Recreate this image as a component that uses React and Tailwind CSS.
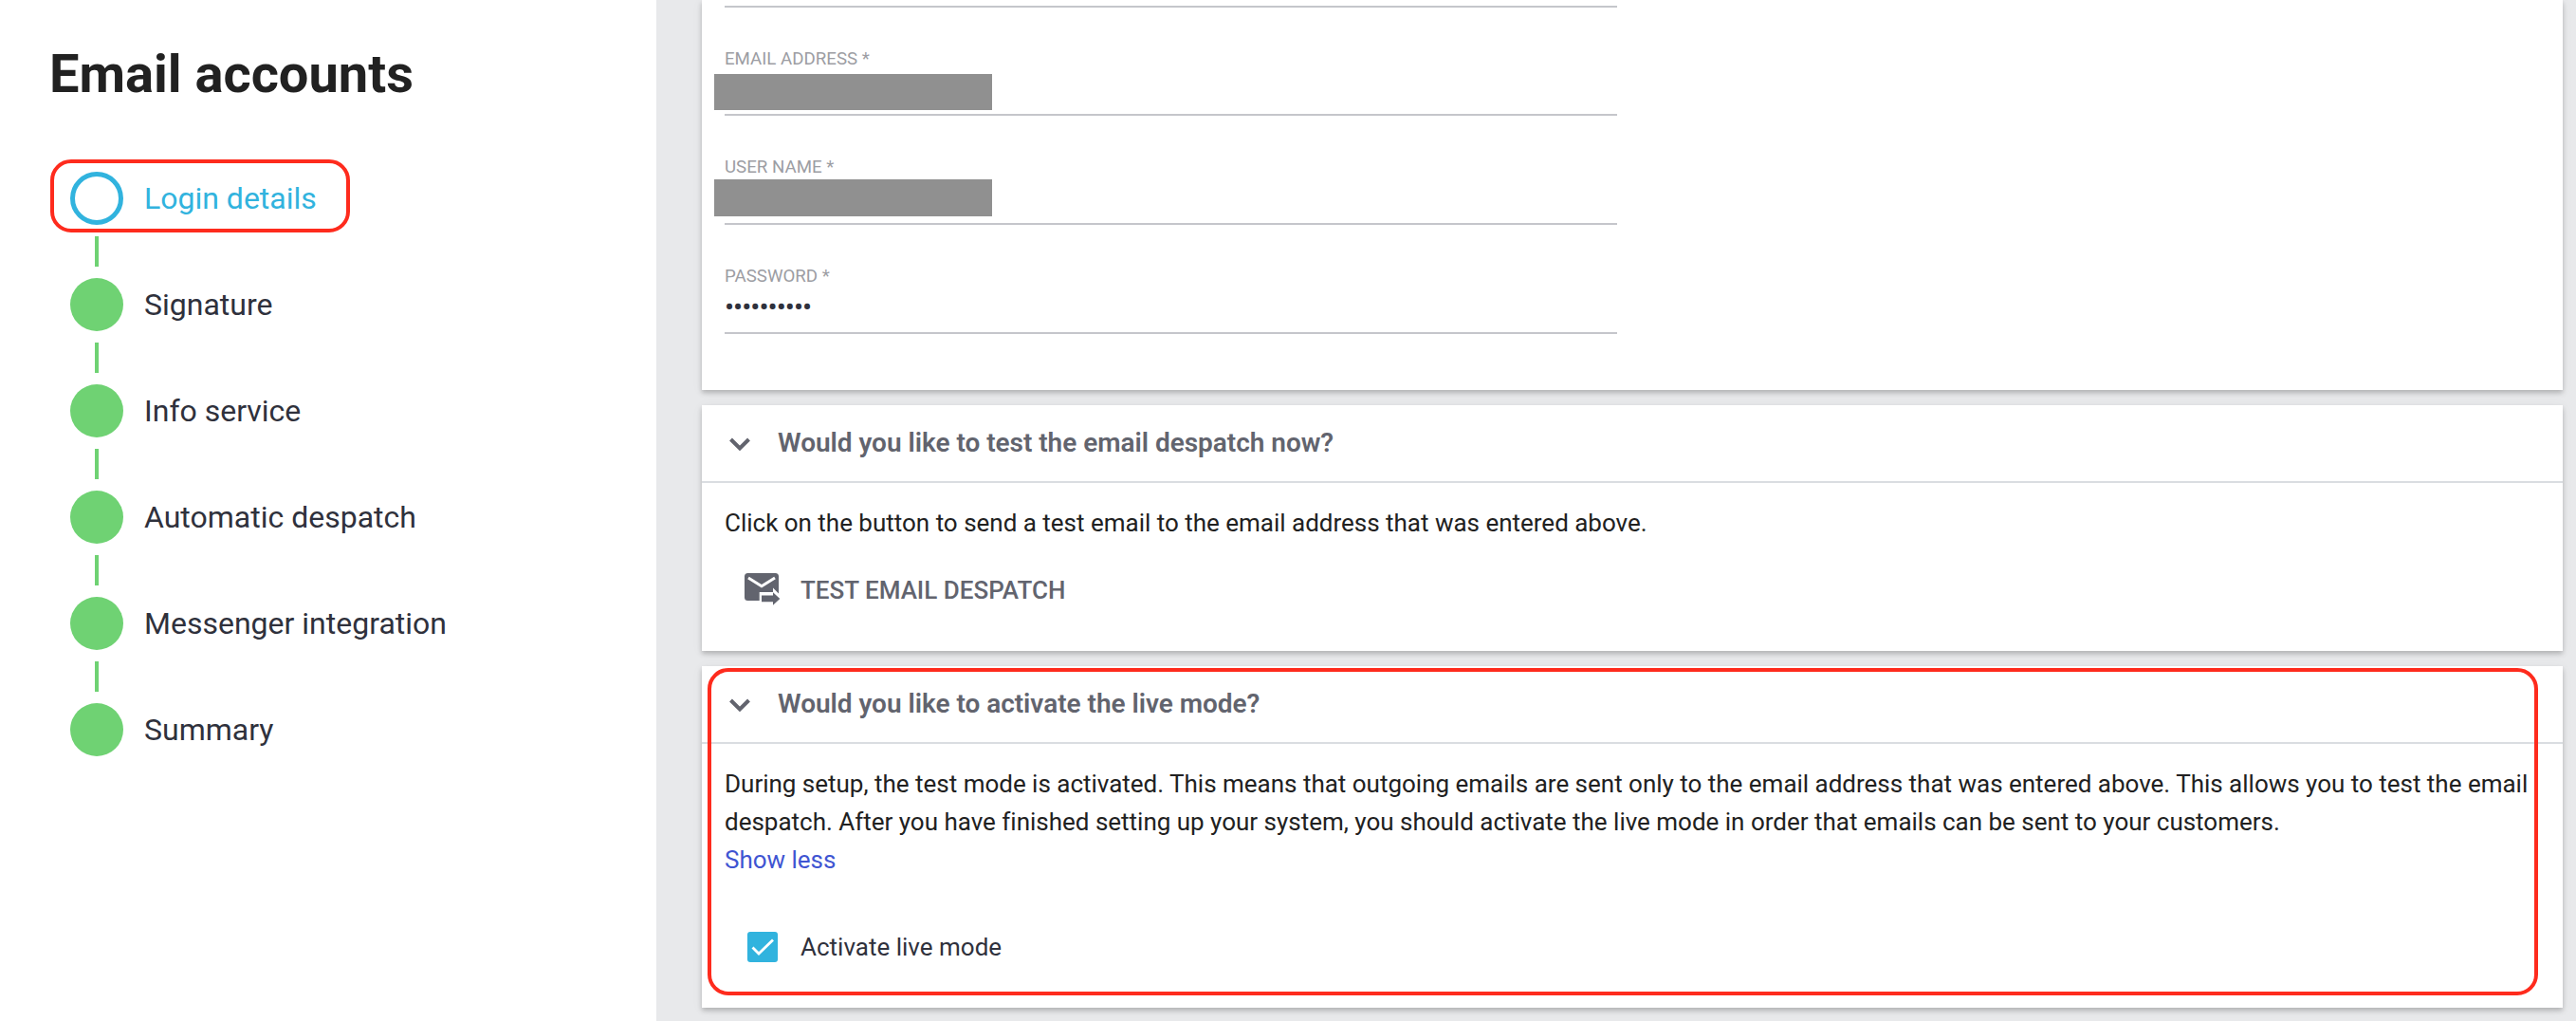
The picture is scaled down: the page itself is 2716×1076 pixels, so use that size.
const steps = ['Login details', 'Signature', 'Info service', 'Automatic despatch', 'Messenger integration', 'Summary'];

function Step({ label, active, last }) {
  return (
    <li>
      <div className={active ? 'relative flex h-14 items-center gap-[22px] text-[#31b3de]' : 'relative flex h-14 items-center gap-[22px] text-[#2f313c]'}>
        {active && <div className="absolute -top-[13px] -left-[21px] h-[77px] w-[316px] rounded-[22px] border-4 border-[#fe2b1d]" />}
        <span className={active ? 'size-14 rounded-full border-[5px] border-[#31b3de]' : 'size-14 rounded-full bg-[#6fd273]'} />
        <span className="text-[32px] leading-10 whitespace-nowrap">{label}</span>
      </div>
      {!last && <div className="my-3 ml-[26px] h-8 w-1 bg-[#6fd273]" />}
    </li>
  );
}

function Card({ className, children }) {
  return (
    <section className={`relative bg-white shadow-[0_3px_5px_rgba(0,0,0,0.22),0_2px_14px_rgba(0,0,0,0.04)] ${className}`}>
      {children}
    </section>
  );
}

function Field({ label, className, children }) {
  return (
    <div className={`w-[941px] border-b-2 border-[#c5c6cb] ${className}`}>
      <div className="text-[18.7px] leading-6 text-[#9c9da3]">{label}</div>
      {children}
    </div>
  );
}

function CardHeader({ title }) {
  return (
    <header className="flex h-[82px] items-center border-b-2 border-[#dadde1] pl-[27px]">
      <svg className="mt-0.5 h-[18px] w-[26px]" viewBox="0 0 26 18" fill="none" stroke="#62646e" strokeWidth="4">
        <path d="M3.500 4 L13 13.500 L22.500 4" />
      </svg>
      <h2 className="-mt-px ml-[27px] text-[28px] leading-9 font-[560] whitespace-nowrap text-[#62646e] tracking-[-0.03px]">{title}</h2>
    </header>
  );
}

function MailSendIcon() {
  return (
    <svg className="h-[36px] w-[40px]" viewBox="0 0 40 36">
      <path fill="#62646e" d="M4.500 1h29A3.500 3.500 0 0 1 37 4.500v18L31 16.500V21H16.700v9H4.500A3.500 3.500 0 0 1 1 26.500v-22A3.500 3.500 0 0 1 4.500 1Z" />
      <path fill="none" stroke="#fff" strokeWidth="3" d="M5 6 19 14.700 33 6" />
      <path fill="#62646e" d="M19 24.500h12v-3.200l7.300 6.700-7.300 6.700v-3.500H19Z" />
    </svg>
  );
}

export default function App() {
  return (
    <div className="flex h-[1076px] w-[2716px] overflow-hidden bg-[#e8e9eb] font-['Roboto',sans-serif]">
      <aside className="w-[692px] shrink-0 bg-white pt-11 pl-[52px]">
        <h1 className="text-[56px] leading-[68px] font-bold whitespace-nowrap text-[#212121]">Email accounts</h1>
        <ul className="mt-[69px] ml-[22px]">
          {steps.map((label, i) => (
            <Step key={label} label={label} active={i === 0} last={i === steps.length - 1} />
          ))}
        </ul>
      </aside>
      <main className="flex w-[2024px] flex-col gap-4 pr-[14px] pl-12">
        <Card className="h-[411px] pl-6">
          <div className="h-2 w-[941px] border-b-2 border-[#c5c6cb]" />
          <Field label="EMAIL ADDRESS *" className="mt-[42px] h-[72px]">
            <div className="mt-1 -ml-[11px] h-[38px] w-[293px] bg-[#909090]" />
          </Field>
          <Field label="USER NAME *" className="mt-[42px] h-[73px]">
            <div className="mt-[1px] -ml-[11px] h-[39px] w-[293px] bg-[#909090]" />
          </Field>
          <Field label="PASSWORD *" className="mt-[42px] h-[73px]">
            <div className="mt-[5px] text-[30px] leading-8 tracking-[-1px] text-[#2f313c]">••••••••••</div>
          </Field>
        </Card>
        <Card className="h-[259px]">
          <CardHeader title="Would you like to test the email despatch now?" />
          <p className="mt-[22px] ml-6 text-[26px] leading-10 whitespace-nowrap text-[#212121] tracking-[-0.01px]">
            Click on the button to send a test email to the email address that was entered above.
          </p>
          <button className="mt-[32px] ml-11 flex h-9 items-center gap-5 text-[26px] font-medium text-[#62646e]">
            <MailSendIcon />
            <span className="pt-0.5 whitespace-nowrap">TEST EMAIL DESPATCH</span>
          </button>
        </Card>
        <Card className="h-[360px]">
          <CardHeader title="Would you like to activate the live mode?" />
          <p className="mt-[22px] ml-6 text-[26px] leading-10 whitespace-nowrap text-[#212121] tracking-[-0.01px]">
            During setup, the test mode is activated. This means that outgoing emails are sent only to the email address that was entered above. This allows you to test the email
            <br />
            despatch. After you have finished setting up your system, you should activate the live mode in order that emails can be sent to your customers.
            <br />
            <a className="text-[#3f55d2]">Show less</a>
          </p>
          <label className="mt-14 ml-12 flex h-8 items-center gap-6 text-[26px] text-[#2f313c]">
            <span className="flex size-8 items-center justify-center rounded-[3px] bg-[#31b3de]">
              <svg className="size-8" viewBox="0 0 32 32" fill="none" stroke="#fff" strokeWidth="2.800">
                <path d="M5.500 16.500 12 23 27 8.500" />
              </svg>
            </span>
            <span className="whitespace-nowrap">Activate live mode</span>
          </label>
          <div className="absolute top-[2px] left-[6px] h-[345px] w-[1930px] rounded-[22px] border-4 border-[#fe2b1d]" />
        </Card>
      </main>
    </div>
  );
}
